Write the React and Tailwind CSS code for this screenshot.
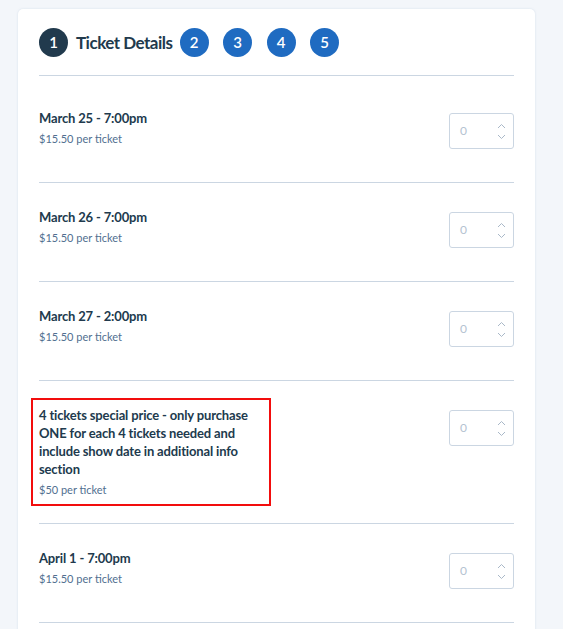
import React from "react";

const rows = [
  { title: "March 25 - 7:00pm", price: "$15.50 per ticket" },
  { title: "March 26 - 7:00pm", price: "$15.50 per ticket" },
  { title: "March 27 - 2:00pm", price: "$15.50 per ticket" },
  {
    title:
      "4 tickets special price - only purchase ONE for each 4 tickets needed and include show date in additional info section",
    price: "$50 per ticket",
    highlight: true,
  },
  { title: "April 1 - 7:00pm", price: "$15.50 per ticket" },
];

function Step({ n, active }) {
  return (
    <div
      className={`flex h-[29px] w-[29px] items-center justify-center rounded-full text-[15px] font-semibold text-white ${
        active ? "bg-[#213a4d]" : "bg-[#1f6bc1]"
      }`}
    >
      {n}
    </div>
  );
}

function QtyInput() {
  return (
    <div className="mt-[4px] mb-2 flex h-[36px] w-[65px] items-center justify-between rounded-[3px] border border-[#cbd6e2] bg-white pl-[10px] pr-[7px]">
      <span className="text-[12px] text-[#b4c2d1]">0</span>
      <div className="flex flex-col items-center gap-[5px]">
        <svg width="9" height="6" viewBox="0 0 9 6" fill="none">
          <polyline points="1,5 4.5,1.5 8,5" stroke="#a9b8c8" strokeWidth="1" />
        </svg>
        <svg width="9" height="6" viewBox="0 0 9 6" fill="none">
          <polyline points="1,1 4.5,4.5 8,1" stroke="#a9b8c8" strokeWidth="1" />
        </svg>
      </div>
    </div>
  );
}

export default function App() {
  return (
    <div
      className="min-h-screen bg-[#f3f6fa] pl-[18px] pr-[28px] pt-[9px]"
      style={{ fontFamily: "Lato, 'Open Sans', sans-serif" }}
    >
      <div className="min-h-[640px] rounded-t-[5px] bg-white px-[21px] shadow-[0_0_2px_rgba(180,200,220,0.5)]">
        <header className="flex items-center border-b border-[#cbd6e2] pt-[19px] pb-[18px]">
          <Step n={1} active />
          <span className="ml-[8px] mr-[7px] text-[17px] font-bold tracking-[-0.5px] text-[#213a4d]">
            Ticket Details
          </span>
          <div className="flex gap-[14.5px]">
            <Step n={2} />
            <Step n={3} />
            <Step n={4} />
            <Step n={5} />
          </div>
        </header>

        <div className="pt-2">
          {rows.map((row, i) => (
            <div
              key={i}
              className="flex items-start justify-between border-b border-[#cbd6e2] pt-[25px] pb-[25px]"
            >
              <div
                className={`w-[224px] ${
                  row.highlight
                    ? "outline-2 outline-offset-[6px] outline-[#f20d0d]"
                    : ""
                }`}
              >
                <div className="text-[13px] font-bold leading-[18px] tracking-[-0.15px] text-[#213a4d]">
                  {row.title}
                </div>
                <div className="mt-[4px] text-[11px] leading-[16px] text-[#516f90]">
                  {row.price}
                </div>
              </div>
              <QtyInput />
            </div>
          ))}
        </div>
      </div>
    </div>
  );
}
